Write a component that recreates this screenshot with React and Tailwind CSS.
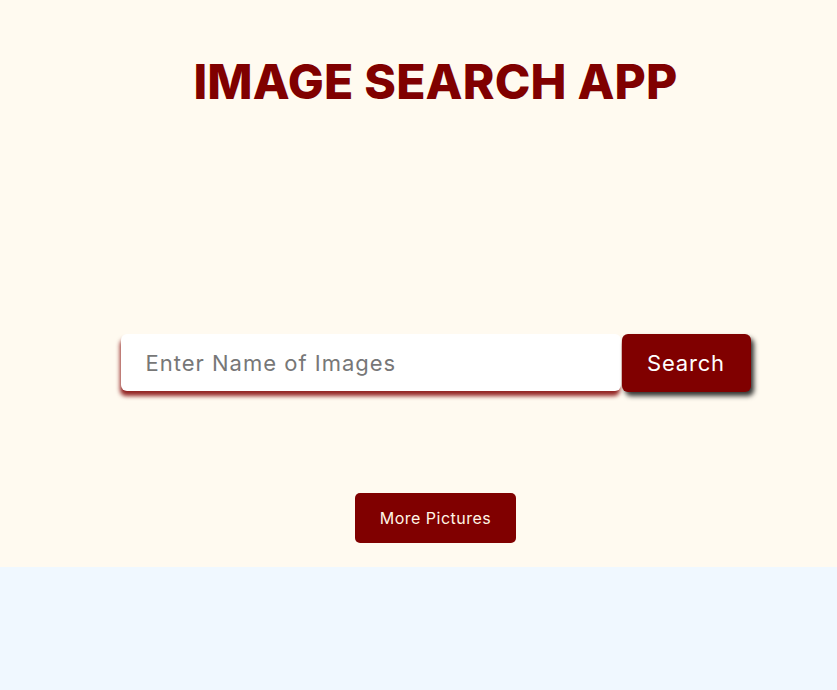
export default function App() {
  return (
    <div className="min-h-[690px] bg-[#f0f8ff]">
      <div className="bg-[#fffaf0] pl-[34px] pb-[24px] pt-[51px] font-['Inter',sans-serif]">
        <h1 className="text-center text-[48px] leading-[62px] font-extrabold text-[#800000] tracking-[0.2px]">
          IMAGE SEARCH APP
        </h1>
        <form className="mt-[221px] flex justify-center" onSubmit={(e) => e.preventDefault()}>
          <input
            type="text"
            placeholder="Enter Name of Images"
            className="w-[500px] h-[57px] rounded-[6px] bg-white px-[25px] text-[22px] tracking-[1px] text-[#333] placeholder:text-[#777] outline-none shadow-[-1px_5px_4px_rgba(128,0,0,0.85)]"
          />
          <button
            type="submit"
            className="ml-[1px] w-[129px] h-[58px] rounded-[6px] bg-[#800000] text-white text-[22px] tracking-[0.8px] shadow-[3px_4px_5px_rgba(0,0,0,0.8)]"
          >
            Search
          </button>
        </form>
        <div className="mt-[101px] flex justify-center">
          <button className="w-[161px] h-[50px] rounded-[5px] bg-[#800000] text-[#fff6e6] text-[16px] tracking-[0.5px]">
            More Pictures
          </button>
        </div>
      </div>
    </div>
  );
}
